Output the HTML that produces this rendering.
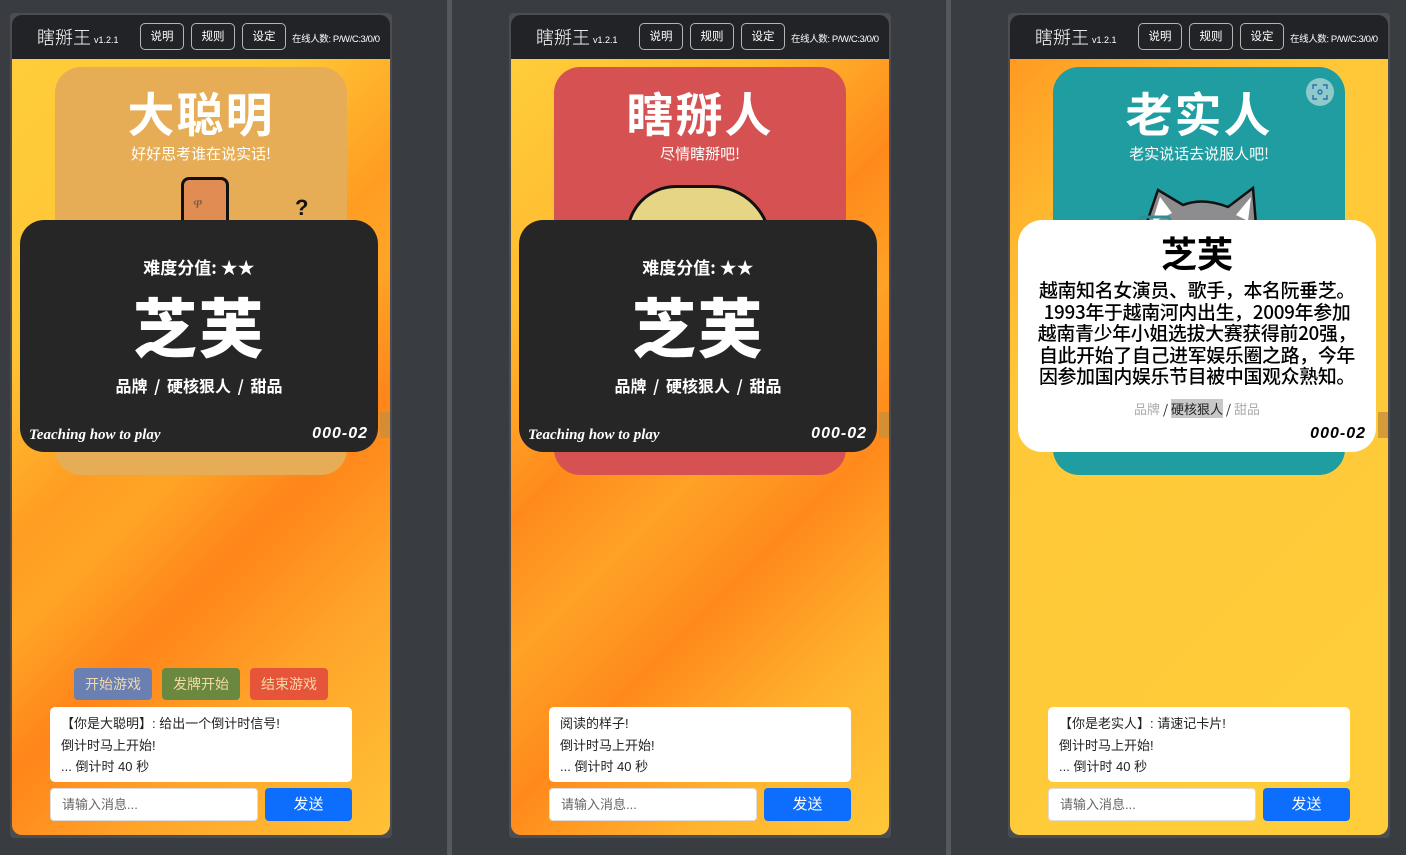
<!DOCTYPE html>
<html><head><meta charset="utf-8">
<style>
*{margin:0;padding:0;box-sizing:border-box}
body{width:1406px;height:855px;background:#393c41;position:relative;overflow:hidden;font-family:"Liberation Sans","Noto Sans CJK SC",sans-serif}
.sep{position:absolute;top:0;width:5px;height:855px;background:#55585d}
.panel{position:absolute;top:0;width:420px;height:855px}
.frame{position:absolute;left:10px;top:13px;width:382px;height:825px;background:#4b4d52;border-radius:4px}
.phone{position:absolute;left:12px;top:15px;width:378px;height:820px;border-radius:10px;overflow:hidden}
.hdr{position:absolute;left:0;top:0;width:378px;height:44px;background:#212327;color:#fff}
.title{position:absolute;left:25px;top:9px;font-size:18px;font-family:"Noto Sans CJK SC",sans-serif;font-weight:300}
.ver{position:absolute;left:82px;top:20px;font-size:9px}
.hb{position:absolute;top:8px;width:44px;height:27px;border:1px solid #b5b5b5;border-radius:5px;font-size:11.5px;text-align:center;line-height:26px}
.online{position:absolute;left:280px;top:16px;font-size:9.5px;letter-spacing:-0.4px}
.body{position:absolute;left:0;top:44px;width:378px;height:776px}
.role{position:absolute;left:43px;top:8px;width:292px;height:408px;border-radius:26px;text-align:center;color:#fff;overflow:hidden}
.role h1{margin-top:16px;font-size:47px;font-weight:bold;font-family:"Noto Sans CJK SC",sans-serif;line-height:58px;letter-spacing:2px}
.role p{font-size:15px;font-family:"Noto Sans CJK SC",sans-serif;margin-top:2px}
.card{position:absolute;left:8px;top:161px;width:358px;height:232px;border-radius:24px;text-align:center}
.dark{background:#262626;color:#fff}
.dark .diff{margin-top:34px;font-size:17px;font-weight:bold;font-family:"Noto Sans CJK SC",sans-serif}
.dark .name{margin-top:6px;font-size:64px;font-weight:900;font-family:"Noto Sans CJK SC",sans-serif;line-height:80px;letter-spacing:2px}
.dark .tags{margin-top:8px;font-size:16px;font-weight:bold;font-family:"Noto Sans CJK SC",sans-serif;word-spacing:3px}
.teach{position:absolute;left:9px;bottom:8px;font-family:"Liberation Serif",serif;font-style:italic;font-weight:bold;font-size:15px}
.num{position:absolute;right:10px;bottom:9px;font-style:italic;font-weight:900;font-size:16px;letter-spacing:1px}
.white{background:#fff;color:#000}
.white .name{margin-top:10px;font-size:36px;font-weight:bold;font-family:"Noto Sans CJK SC",sans-serif;line-height:44px}
.white .desc{margin:5px 0 0;font-size:18.9px;line-height:21.5px;font-weight:500;font-family:"Noto Sans CJK SC",sans-serif;white-space:nowrap;letter-spacing:-0.3px}
.white .tags{margin-top:12px;font-size:13px;color:#aaa;font-family:"Noto Sans CJK SC",sans-serif}
.white .tags b{color:#222;font-weight:normal}
.white .tags span{background:#c8c8c8;color:#222}
.scroll{position:absolute;left:368px;top:353px;width:10px;height:26px;background:#c98e3a;opacity:.8}
.gb{position:absolute;top:609px;width:78px;height:32px;border-radius:4px;color:#f3d9a8;font-size:14px;text-align:center;line-height:32px}
.chat{position:absolute;left:38px;top:648px;width:302px;height:75px;background:#fff;border-radius:5px;font-size:13px;color:#222;padding:6px 11px;line-height:21.5px;overflow:hidden}
.input{position:absolute;left:38px;top:729px;width:208px;height:33px;background:#fff;border:1px solid #ddd;border-radius:4px;font-size:13px;color:#666;padding-left:11px;line-height:31px}
.send{position:absolute;left:253px;top:729px;width:87px;height:33px;background:#0d6efd;border-radius:4px;color:#fff;font-size:15px;text-align:center;line-height:33px}
</style></head><body>
<div class="sep" style="left:447px"></div>
<div class="sep" style="left:946px"></div>

<div class="panel" style="left:0">
<div class="frame"></div>
<div class="phone">
 <div class="hdr"><span class="title">瞎掰王</span><span class="ver">v1.2.1</span>
 <div class="hb" style="left:128px">说明</div><div class="hb" style="left:179px">规则</div><div class="hb" style="left:230px">设定</div>
 <span class="online">在线人数: P/W/C:3/0/0</span></div>
 <div class="body" style="background:linear-gradient(135deg,#ffcd3a 0%,#ffc534 25%,#ff9d22 42%,#ffa526 50%,#ff8519 62%,#ffa52a 78%,#ffc236 100%)">
  <div class="role" style="background:#e6ad56"><h1>大聪明</h1><p>好好思考谁在说实话!</p>
   <div style="position:absolute;left:126px;top:110px;width:48px;height:60px;background:#e08c52;border:3px solid #111;border-radius:8px 8px 0 0"></div>
   <div style="position:absolute;left:138px;top:128px;font-size:14px;color:#7a5a3a">ዋ</div>
   <div style="position:absolute;left:240px;top:128px;font-size:22px;color:#111;font-weight:bold">?</div>
  </div>
  <div class="card dark"><div class="diff">难度分值: ★★</div><div class="name">芝芙</div><div class="tags">品牌 / 硬核狠人 / 甜品</div>
   <div class="teach">Teaching how to play</div><div class="num">000-02</div></div>
  <div class="scroll"></div>
  <div class="gb" style="left:62px;background:#6a80b2">开始游戏</div>
  <div class="gb" style="left:150px;background:#6b893e">发牌开始</div>
  <div class="gb" style="left:238px;background:#e6553a">结束游戏</div>
  <div class="chat">【你是大聪明】: 给出一个倒计时信号!<br>倒计时马上开始!<br>... 倒计时 40 秒</div>
  <div class="input">请输入消息...</div><div class="send">发送</div>
 </div>
</div></div>

<div class="panel" style="left:499px">
<div class="frame"></div>
<div class="phone">
 <div class="hdr"><span class="title">瞎掰王</span><span class="ver">v1.2.1</span>
 <div class="hb" style="left:128px">说明</div><div class="hb" style="left:179px">规则</div><div class="hb" style="left:230px">设定</div>
 <span class="online">在线人数: P/W/C:3/0/0</span></div>
 <div class="body" style="background:linear-gradient(135deg,#ffcd3a 0%,#ffbb30 22%,#ff8a1b 40%,#ffa226 52%,#ff8a1b 65%,#ffb22e 82%,#ffc838 100%)">
  <div class="role" style="background:#d65252"><h1>瞎掰人</h1><p>尽情瞎掰吧!</p>
   <div style="position:absolute;left:72px;top:118px;width:146px;height:70px;background:#e5d585;border:3px solid #111;border-radius:50px 60px 0 0"></div>
  </div>
  <div class="card dark"><div class="diff">难度分值: ★★</div><div class="name">芝芙</div><div class="tags">品牌 / 硬核狠人 / 甜品</div>
   <div class="teach">Teaching how to play</div><div class="num">000-02</div></div>
  <div class="scroll"></div>
  <div class="chat">阅读的样子!<br>倒计时马上开始!<br>... 倒计时 40 秒</div>
  <div class="input">请输入消息...</div><div class="send">发送</div>
 </div>
</div></div>

<div class="panel" style="left:998px">
<div class="frame"></div>
<div class="phone">
 <div class="hdr"><span class="title">瞎掰王</span><span class="ver">v1.2.1</span>
 <div class="hb" style="left:128px">说明</div><div class="hb" style="left:179px">规则</div><div class="hb" style="left:230px">设定</div>
 <span class="online">在线人数: P/W/C:3/0/0</span></div>
 <div class="body" style="background:linear-gradient(135deg,#ff9a22 0%,#ffb52e 15%,#ffc838 30%,#ffcd3a 100%)">
  <div class="role" style="background:#1f9da0"><h1>老实人</h1><p>老实说话去说服人吧!</p>
   <div style="position:absolute;left:253px;top:11px;width:28px;height:28px;border-radius:50%;background:#8fcaca"></div>
   <svg style="position:absolute;left:259px;top:17px" width="16" height="16" viewBox="0 0 16 16" fill="none" stroke="#2d6fb0" stroke-width="1.4"><path d="M1 5V1h4M11 1h4v4M15 11v4h-4M5 15H1v-4"/><circle cx="8" cy="8" r="2"/></svg>
   <svg style="position:absolute;left:85px;top:118px" width="130" height="40" viewBox="0 0 130 40"><path d="M8 40 L20 5 L45 20 Q65 12 90 22 L115 3 L118 40Z" fill="#8d8d8f" stroke="#111" stroke-width="2.5"/><path d="M14 38 L22 12 L34 28Z M110 36 L113 12 L98 30Z" fill="#fff"/><rect x="2" y="32" width="30" height="10" rx="3" fill="none" stroke="#2b8f95" stroke-width="3"/></svg>
  </div>
  <div class="card white"><div class="name">芝芙</div>
   <div class="desc">越南知名女演员、歌手，本名阮垂芝。<br>1993年于越南河内出生，2009年参加<br>越南青少年小姐选拔大赛获得前20强，<br>自此开始了自己进军娱乐圈之路，今年<br>因参加国内娱乐节目被中国观众熟知。</div>
   <div class="tags">品牌 <b>/</b> <span>硬核狠人</span> <b>/</b> 甜品</div>
   <div class="num" style="color:#000">000-02</div></div>
  <div class="scroll"></div>
  <div class="chat">【你是老实人】: 请速记卡片!<br>倒计时马上开始!<br>... 倒计时 40 秒</div>
  <div class="input">请输入消息...</div><div class="send">发送</div>
 </div>
</div></div>
</body></html>
